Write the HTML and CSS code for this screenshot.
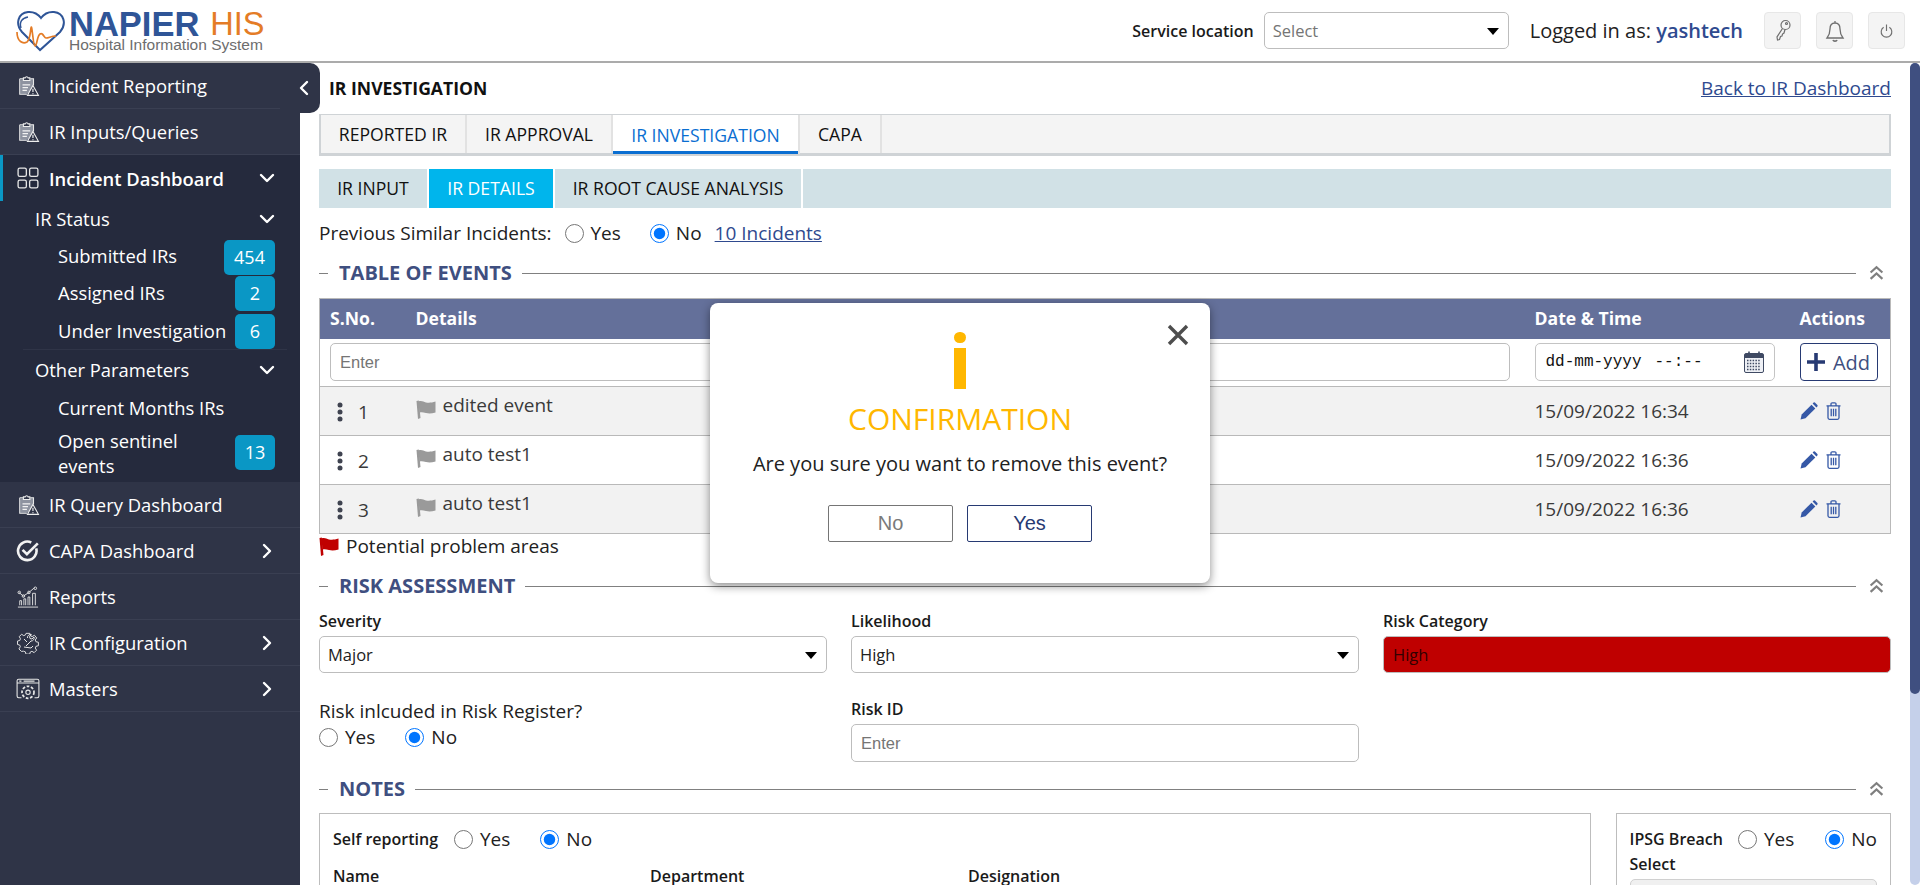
FILE: index.html
```html
<!DOCTYPE html>
<html lang="en">
<head>
<meta charset="utf-8">
<title>IR Investigation - Napier HIS</title>
<link rel="stylesheet" href="styles.css">
</head>
<body>
<svg class="defs" width="0" height="0" aria-hidden="true">
  <symbol id="i-clip" viewBox="0 0 20 20">
    <path d="M2.5 3.5h3M12 3.5h3v6M2.5 3.5v14h6.5" fill="#9aa0ac" stroke="#e8e8e8" stroke-width="1"/>
    <rect x="3" y="4" width="11.5" height="13" fill="#8e93a0"/>
    <path d="M5.8 4V2.6h1.6a1.4 1.4 0 0 1 2.7 0h1.6V5H5.8z" fill="#2f3447" stroke="#eee"/>
    <path d="M5 9h7M5 11.500h5M5 14h4" stroke="#f2f2f2" stroke-width="1"/>
    <path d="M14.500 9.500l5 9h-10z" fill="#2f3447" stroke="#eee"/>
    <path d="M14.500 12.500v3M14.500 16.500v1" stroke="#fff"/>
  </symbol>
  <symbol id="i-grid" viewBox="0 0 20 20" fill="none" stroke="#e6e6e6" stroke-width="1.200">
    <rect x="1" y="1" width="7.500" height="7.500" rx="1.500"/><rect x="11.500" y="1" width="7.500" height="7.500" rx="1.500"/>
    <rect x="1" y="12" width="7.500" height="7" rx="1.500"/><rect x="11.500" y="12" width="7.500" height="7" rx="1.500"/>
  </symbol>
  <symbol id="i-check" viewBox="0 0 22 20" fill="none" stroke="#f2f2f2" stroke-width="2.400">
    <path d="M18.500 7.500A8.500 8.500 0 1 1 14 2.200"/><path d="M6 9l4 4 10-10"/>
  </symbol>
  <symbol id="i-chart" viewBox="0 0 24 24" fill="none" stroke="#e6e6e6" stroke-width="1">
    <path d="M1 23h22M3 21v-5h2v5M7.500 21v-7h2v7M12 21v-9h2v9M17 21v-13h3v13"/>
    <path d="M2 7l5 4 6-4 6-5" /><circle cx="2.500" cy="7" r="1.400"/><circle cx="7" cy="11" r="1.400"/><circle cx="13" cy="7" r="1.400"/><circle cx="20" cy="2.500" r="1.400"/>
  </symbol>
  <symbol id="i-gear" viewBox="0 0 22 22" fill="none" stroke="#e6e6e6" stroke-width="1">
    <path d="M9 1h4l.6 2.600 1.800.8L17.800 3l2.400 2.800-1.500 2.200.7 1.800 2.600.6v3.600l-2.600.7-.7 1.700 1.400 2.300-2.600 2.600-2.300-1.400-1.700.7-.7 2.300H8.900l-.6-2.400-1.900-.7L4.100 20 1.500 17.400 3 15.100l-.7-1.800L0 12.700V9.100l2.400-.6.700-1.800L1.800 4.400 4.400 2l2.200 1.400 1.800-.8z" transform="translate(.5 .4) scale(.95)"/>
    <path d="M7 7l3 3M9 14l5-5a3 3 0 0 0 3-4l-2 2-2-.5-.5-2 2-1.800a3 3 0 0 0-4 3.300"/>
    <path d="M7 15l7 1 2-2"/>
  </symbol>
  <symbol id="i-window" viewBox="0 0 22 20" fill="none" stroke="#e6e6e6" stroke-width="1">
    <path d="M5 18H2.500A1.500 1.500 0 0 1 1 16.500v-14A1.500 1.500 0 0 1 2.500 1h17A1.500 1.500 0 0 1 21 2.500v14a1.500 1.500 0 0 1-1.500 1.500H17M1 4.500h20"/>
    <path d="M3 2.800h2M7 2.800h10" />
    <circle cx="11" cy="13" r="2"/><circle cx="11" cy="13" r="5.500" stroke-dasharray="2.500 1.500" stroke-width="1.600"/>
  </symbol>
  <symbol id="i-chev-d" viewBox="0 0 16 10" fill="none" stroke="#fff" stroke-width="2.400" stroke-linecap="round" stroke-linejoin="round">
    <path d="M2 2l6 6 6-6"/>
  </symbol>
  <symbol id="i-chev-r" viewBox="0 0 10 16" fill="none" stroke="#fff" stroke-width="2.400" stroke-linecap="round" stroke-linejoin="round">
    <path d="M2 2l6 6-6 6"/>
  </symbol>
  <symbol id="i-up" viewBox="0 0 14 14" fill="none" stroke="#7f7f7f" stroke-width="2">
    <path d="M1.500 6.500L7 1.500l5.500 5M1.500 12.500L7 7.500l5.500 5"/>
  </symbol>
  <symbol id="i-flag" viewBox="0 0 20 20">
    <path d="M0.500 2l2.300-.5L4.500 19 2 20z" fill="currentColor"/>
    <path d="M2.400 2.600c3-1.300 5 .2 7.500 .8 3 .6 5.800 .3 9.600-.9v11c-3.600 1.100-6.500 1.400-9.500 .6-2.800-.8-4.700-1.300-6.500-.4z" fill="currentColor"/>
  </symbol>
  <symbol id="i-pencil" viewBox="0 0 18 18">
    <path d="M0.500 17.500l1.200-5L11.500 2.700l3.800 3.800L5.500 16.300z" fill="#3558a6"/><path d="M12.600 1.600l1-1a1 1 0 0 1 1.300 0l2.500 2.500a1 1 0 0 1 0 1.300l-1 1z" fill="#3558a6"/>
  </symbol>
  <symbol id="i-trash" viewBox="0 0 15 18" fill="none" stroke="#3558a6" stroke-width="1.300">
    <path d="M.5 3.800h14M5 3.500V2a1.200 1.200 0 0 1 1.200-1.200h2.600A1.200 1.200 0 0 1 10 2v1.500M2 4v11.800A1.500 1.500 0 0 0 3.500 17.300h8a1.500 1.500 0 0 0 1.500-1.500V4M5.200 6.800v7.500M7.500 6.800v7.500M9.800 6.800v7.500"/>
  </symbol>
  <symbol id="i-kebab" viewBox="0 0 6 20">
    <circle cx="3" cy="3" r="2.500" fill="#3f4350"/><circle cx="3" cy="10" r="2.500" fill="#3f4350"/><circle cx="3" cy="17" r="2.500" fill="#3f4350"/>
  </symbol>
</svg>

<div class="app">
  <header class="topbar">
    <div class="logo">
      <svg class="logo-heart" viewBox="0 0 50 42" fill="none">
        <path d="M24 40L6 22C-1 14 2 3 12 2c6-.5 10 2 13 6 3-4 8-6.500 13-6 10 1 13 12 6 20z" stroke="#2f5597" stroke-width="2"/>
        <path d="M12 7C6 8 3 12 5 18" stroke="#2f5597" stroke-width="1.500"/>
        <path d="M1 22c0 10 6 12 10 10 3-2 3-8 4-14 1-6 2 18 4 18 2 0 2-10 5-12 3-2 4 4 6 4 3 0 5-2 10-2" stroke="#e47c26" stroke-width="1.700"/>
      </svg>
      <div class="logo-text">
        <div class="logo-name"><span class="logo-napier">NAPIER</span><span class="logo-his">HIS</span></div>
        <div class="logo-sub">Hospital Information System</div>
      </div>
    </div>
    <div class="top-right">
      <span class="svc-label">Service location</span>
      <div class="select-wrap svc-select"><select class="field-select muted"><option>Select</option></select></div>
      <span class="logged">Logged in as: <b>yashtech</b></span>
      <button class="icon-btn" aria-label="Key">
        <svg width="16" height="24" viewBox="0 0 16 24" fill="none" stroke="#6f6f6f" stroke-width="1.200"><circle cx="10.500" cy="6" r="4.500"/><circle cx="11.500" cy="4.500" r="1"/><path d="M7.500 9.500L2 18l.5 3 2-.5 1-3 1.500-.5.500-2 1.500-1 1-3.500"/></svg>
      </button>
      <button class="icon-btn" aria-label="Notifications">
        <svg width="20" height="24" viewBox="0 0 20 24" fill="none" stroke="#6f6f6f" stroke-width="1.300"><path d="M10 2v2M10 4c-4 0-5 3-5 6 0 5-1.500 7-3 9h16c-1.500-2-3-4-3-9 0-3-1-6-5-6z"/><path d="M8 21c.5 1.500 3.500 1.500 4 0" stroke-width="1.600"/></svg>
      </button>
      <button class="icon-btn" aria-label="Log out">
        <svg width="15" height="18" viewBox="0 0 18 22" fill="none" stroke="#6f6f6f" stroke-width="1.400"><path d="M9 3v8M5.500 6.500a6.500 6.500 0 1 0 7 0"/></svg>
      </button>
    </div>
  </header>

  <div class="workspace">
    <nav class="sidebar">
      <button class="collapse" aria-label="Collapse"><svg width="10" height="16" viewBox="0 0 10 16" fill="none" stroke="#fff" stroke-width="2.400" stroke-linecap="round" stroke-linejoin="round"><path d="M8 2L2 8l6 6"/></svg></button>
      <a class="nav-item first"><svg class="nav-ico"><use href="#i-clip"/></svg>Incident Reporting</a>
      <a class="nav-item"><svg class="nav-ico"><use href="#i-clip"/></svg>IR Inputs/Queries</a>
      <div class="nav-open">
        <a class="nav-item active"><svg class="nav-ico"><use href="#i-grid"/></svg><span class="grow">Incident Dashboard</span><svg class="chev-d"><use href="#i-chev-d"/></svg></a>
        <a class="sub-head"><span class="grow">IR Status</span><svg class="chev-d"><use href="#i-chev-d"/></svg></a>
        <a class="sub-item s1"><span class="grow">Submitted IRs</span><span class="badge wide">454</span></a>
        <a class="sub-item s2"><span class="grow">Assigned IRs</span><span class="badge">2</span></a>
        <a class="sub-item s3"><span class="grow">Under Investigation</span><span class="badge">6</span></a>
        <a class="sub-head divided"><span class="grow">Other Parameters</span><svg class="chev-d"><use href="#i-chev-d"/></svg></a>
        <a class="sub-item s4"><span class="grow">Current Months IRs</span></a>
        <a class="sub-item s5"><span class="grow">Open sentinel<br>events</span><span class="badge">13</span></a>
      </div>
      <a class="nav-item"><svg class="nav-ico"><use href="#i-clip"/></svg>IR Query Dashboard</a>
      <a class="nav-item"><svg class="nav-ico"><use href="#i-check"/></svg><span class="grow">CAPA Dashboard</span><svg class="chev-r"><use href="#i-chev-r"/></svg></a>
      <a class="nav-item"><svg class="nav-ico"><use href="#i-chart"/></svg><span class="grow">Reports</span></a>
      <a class="nav-item"><svg class="nav-ico"><use href="#i-gear"/></svg><span class="grow">IR Configuration</span><svg class="chev-r"><use href="#i-chev-r"/></svg></a>
      <a class="nav-item"><svg class="nav-ico"><use href="#i-window"/></svg><span class="grow">Masters</span><svg class="chev-r"><use href="#i-chev-r"/></svg></a>
    </nav>

    <main class="main">
      <div class="title-row">
        <h1 class="page-title">IR INVESTIGATION</h1>
        <a class="back-link" href="#">Back to IR Dashboard</a>
      </div>

      <div class="tabs">
        <a class="tab t1">REPORTED IR</a>
        <a class="tab t2">IR APPROVAL</a>
        <a class="tab t3 on">IR INVESTIGATION</a>
        <a class="tab t4">CAPA</a>
      </div>

      <div class="subtabs">
        <a class="subtab st1">IR INPUT</a>
        <a class="subtab st2 on">IR DETAILS</a>
        <a class="subtab st3">IR ROOT CAUSE ANALYSIS</a>
        <span class="subtab-fill"></span>
      </div>

      <div class="similar">
        <span class="similar-label">Previous Similar Incidents:</span>
        <label class="radio r-yes"><input type="radio" name="sim">Yes</label>
        <label class="radio"><input type="radio" name="sim" checked>No</label>
        <a class="incidents-link" href="#">10 Incidents</a>
      </div>

      <div class="section-head"><span class="section-title">TABLE OF EVENTS</span><span class="section-line"></span><svg class="up"><use href="#i-up"/></svg></div>

      <table class="events">
        <colgroup><col class="c-no"><col class="c-det"><col class="c-date"><col class="c-act"></colgroup>
        <thead>
          <tr><th>S.No.</th><th>Details</th><th>Date &amp; Time</th><th>Actions</th></tr>
        </thead>
        <tbody>
          <tr class="entry">
            <td colspan="2"><input class="field enter-main" placeholder="Enter"></td>
            <td>
              <div class="date-field"><span>dd-mm-yyyy</span><span>--:--</span>
                <svg class="cal" width="20" height="22" viewBox="0 0 20 22"><rect x="0.500" y="2.500" width="19" height="19" rx="1.500" fill="#eef0f5" stroke="#3f4a63"/><rect x="1" y="3" width="18" height="4" fill="#3f4a63"/><path d="M5 0.500v4M15 0.500v4" stroke="#3f4a63" stroke-width="1.600"/><path d="M3 9.500h14M3 12.500h14M3 15.500h14M3 18.500h14" stroke="#3f4a63" stroke-width="1.500" stroke-dasharray="1.500 1.300"/></svg>
              </div>
            </td>
            <td><button class="add-btn"><svg width="18" height="18" viewBox="0 0 18 18"><path d="M9 0v18M0 9h18" stroke="#273a73" stroke-width="3.600"/></svg>Add</button></td>
          </tr>
          <tr class="row shade">
            <td><div class="sno"><svg class="kebab"><use href="#i-kebab"/></svg><span class="num">1</span></div></td>
            <td><div class="detail"><svg class="flag grey"><use href="#i-flag"/></svg><span>edited event</span></div></td>
            <td>15/09/2022 16:34</td>
            <td><div class="acts"><svg class="pencil"><use href="#i-pencil"/></svg><svg class="trash"><use href="#i-trash"/></svg></div></td>
          </tr>
          <tr class="row">
            <td><div class="sno"><svg class="kebab"><use href="#i-kebab"/></svg><span class="num">2</span></div></td>
            <td><div class="detail"><svg class="flag grey"><use href="#i-flag"/></svg><span>auto test1</span></div></td>
            <td>15/09/2022 16:36</td>
            <td><div class="acts"><svg class="pencil"><use href="#i-pencil"/></svg><svg class="trash"><use href="#i-trash"/></svg></div></td>
          </tr>
          <tr class="row shade">
            <td><div class="sno"><svg class="kebab"><use href="#i-kebab"/></svg><span class="num">3</span></div></td>
            <td><div class="detail"><svg class="flag grey"><use href="#i-flag"/></svg><span>auto test1</span></div></td>
            <td>15/09/2022 16:36</td>
            <td><div class="acts"><svg class="pencil"><use href="#i-pencil"/></svg><svg class="trash"><use href="#i-trash"/></svg></div></td>
          </tr>
        </tbody>
      </table>

      <div class="legend"><svg class="flag red"><use href="#i-flag"/></svg>Potential problem areas</div>

      <div class="section-head"><span class="section-title">RISK ASSESSMENT</span><span class="section-line"></span><svg class="up"><use href="#i-up"/></svg></div>

      <div class="risk-grid">
        <div class="cell">
          <label class="field-label">Severity</label>
          <div class="select-wrap"><select class="field-select"><option>Major</option></select></div>
        </div>
        <div class="cell">
          <label class="field-label">Likelihood</label>
          <div class="select-wrap"><select class="field-select"><option>High</option></select></div>
        </div>
        <div class="cell">
          <label class="field-label">Risk Category</label>
          <input class="field risk-high" value="High" readonly>
        </div>
        <div class="cell register">
          <div class="register-q">Risk inlcuded in Risk Register?</div>
          <div class="register-opts">
            <label class="radio r-yes2"><input type="radio" name="reg">Yes</label>
            <label class="radio"><input type="radio" name="reg" checked>No</label>
          </div>
        </div>
        <div class="cell">
          <label class="field-label">Risk ID</label>
          <input class="field" placeholder="Enter">
        </div>
      </div>

      <div class="section-head notes-head"><span class="section-title">NOTES</span><span class="section-line"></span><svg class="up"><use href="#i-up"/></svg></div>

      <div class="notes">
        <div class="note-box main-note">
          <div class="opt-row">
            <span class="field-label self">Self reporting</span>
            <label class="radio r-yes3"><input type="radio" name="self">Yes</label>
            <label class="radio"><input type="radio" name="self" checked>No</label>
          </div>
          <div class="name-row">
            <span class="field-label">Name</span>
            <span class="field-label">Department</span>
            <span class="field-label">Designation</span>
          </div>
        </div>
        <div class="note-box ipsg">
          <div class="opt-row">
            <span class="field-label ipsg-label">IPSG Breach</span>
            <label class="radio r-yes4"><input type="radio" name="ipsg">Yes</label>
            <label class="radio"><input type="radio" name="ipsg" checked>No</label>
          </div>
          <div class="field-label ipsg-select">Select</div>
          <div class="ipsg-input"></div>
        </div>
      </div>

      <section class="modal" role="dialog">
        <button class="modal-close" aria-label="Close"><svg width="22" height="22" viewBox="0 0 22 22"><path d="M2 2l18 18M20 2L2 20" stroke="#4d4d4d" stroke-width="3.400"/></svg></button>
        <svg class="modal-i" width="12" height="58" viewBox="0 0 12 58"><rect x="0" y="0" width="12" height="11" rx="5.500" fill="#ffb700"/><rect x="0" y="16" width="12" height="41" fill="#ffb700"/></svg>
        <h2 class="modal-title">CONFIRMATION</h2>
        <p class="modal-text">Are you sure you want to remove this event?</p>
        <div class="modal-btns">
          <button class="m-btn no">No</button>
          <button class="m-btn yes">Yes</button>
        </div>
      </section>
    </main>

    <div class="scrollbar"><div class="scroll-thumb"></div></div>
  </div>
</div>
</body>
</html>
```

FILE: styles.css
```css
* { box-sizing: border-box; }
html, body { margin: 0; height: 100%; overflow: hidden; }
body { font-family: "Open Sans", sans-serif; font-size: 16px; color: #212121; background: #fff; }
.defs { position: absolute; }
a { color: inherit; text-decoration: none; }
button { font-family: inherit; cursor: pointer; }

.app { display: flex; flex-direction: column; height: 885px; }

/* top bar */
.topbar { height: 63px; flex: none; display: flex; align-items: center; justify-content: space-between; border-bottom: 2px solid #ababab; background: #fff; padding: 0 15px 0 16px; }
.logo { display: flex; align-items: center; gap: 3px; }
.logo-heart { width: 50px; height: 42px; }
.logo-text { display: flex; flex-direction: column; font-family: "Liberation Sans", sans-serif; }
.logo-name { display: flex; gap: 11px; line-height: 28px; height: 28px; }
.logo-napier { font-size: 34.500px; font-weight: 700; color: #2f5597; }
.logo-his { font-size: 32.500px; color: #e47c26; }
.logo-sub { font-size: 15.500px; line-height: 14px; color: #6d6d6d; white-space: nowrap; }
.top-right { display: flex; align-items: center; }
.svc-label { font-size: 16px; font-weight: 600; color: #1a1a1a; margin-right: 10px; }
.svc-select { width: 245px; }
.logged { font-size: 20px; margin: 0 21px 0 21px; color: #212121; white-space: nowrap; }
.logged b { font-weight: 600; color: #2f4a8f; }
.icon-btn { width: 37px; height: 37px; margin-left: 15px; padding: 0; display: flex; align-items: center; justify-content: center; background: #f4f4f4; border: 1px solid #e7e7e7; border-radius: 4px; }
.logged + .icon-btn { margin-left: 0; }

/* sidebar */
.workspace { flex: 1; display: flex; min-height: 0; position: relative; }
.sidebar { width: 300px; flex: none; background: #2f3447; color: #fff; position: relative; }
.collapse { position: absolute; left: 280px; top: 0; width: 40px; height: 50px; border: 0; padding: 0 0 0 19px; background: #2f3447; border-radius: 0 10px 10px 0; z-index: 2; display: flex; align-items: center; }
.collapse svg { display: block; }
.nav-item { height: 46px; display: flex; align-items: center; padding: 0 25px 0 16px; font-size: 18.400px; border-bottom: 1px solid #3a3f52; white-space: nowrap; color: #fff; }
.nav-ico { width: 24px; height: 22px; margin-right: 9px; flex: none; }
.grow { flex: 1; }
.nav-open { background: #252a3d; padding-bottom: 4px; }
.nav-open .nav-item { background: #252a3d; border-bottom: 0; font-weight: 600; box-shadow: inset 3px 0 #0a97c5; }
.chev-d { width: 16px; height: 10px; flex: none; }
.chev-r { width: 10px; height: 16px; flex: none; margin-right: 3px; }
.sub-head { display: flex; align-items: center; height: 35px; margin: 0 25px 0 35px; font-size: 18.400px; }
.sub-head.divided { border-top: 1px solid #2f3447; margin-left: 23px; padding-left: 12px; margin-right: 13px; padding-right: 12px; height: 40px; }
.sub-item { display: flex; align-items: center; padding: 0 25px 0 58px; font-size: 18.400px; line-height: 25px; }
.s1 { height: 38px; }
.s2 { height: 37px; }
.s3 { height: 38px; }
.s4 { height: 36px; }
.s5 { height: 50px; margin-top: 3px; }
.s1 .badge { margin-top: 4px; }
.s2 .badge { margin-top: 2px; }
.s3 .badge { margin-top: 3px; }
.s5 .badge { margin-top: -1px; }
.badge { min-width: 40px; height: 35px; padding: 0 5px; display: flex; align-items: center; justify-content: center; background: #0a97c5; border-radius: 5px; color: #fff; font-size: 18px; }
.badge.wide { min-width: 51px; }

/* main */
.main { flex: 1; min-width: 0; padding: 0 19px; position: relative; overflow: hidden; }
.title-row { height: 51px; display: flex; align-items: center; justify-content: space-between; padding: 0 0 2px 10px; }
.page-title { margin: 0; font-size: 17.600px; font-weight: 700; color: #111; }
.back-link { font-size: 19px; color: #2f4a8f; text-decoration: underline; }

.tabs { height: 42px; display: flex; background: #f4f4f4; border: 2px solid #cfd3d6; border-top-width: 1px; border-bottom-width: 3px; }
.tab { display: flex; align-items: center; justify-content: center; font-size: 17.600px; color: #111; border-right: 2px solid #e2e2e2; }
.t1 { width: 146px; }
.t2 { width: 146px; }
.t3 { width: 187px; }
.t4 { width: 82px; }
.tab.on { background: #fff; color: #0a6ed1; box-shadow: inset 0 -3px #0a6ed1; margin-bottom: -1px; }

.subtabs { height: 39px; margin-top: 13px; display: flex; gap: 2px; }
.subtab { display: flex; align-items: center; justify-content: center; background: #d1e1e6; font-size: 17.600px; color: #111; padding-bottom: 2px; }
.st1 { width: 108px; }
.st2 { width: 124px; }
.st3 { width: 246px; }
.subtab.on { background: #00b5ec; color: #fff; }
.subtab-fill { flex: 1; background: #d1e1e6; }

.similar { height: 50px; display: flex; align-items: center; font-size: 19px; }
.similar-label { margin-right: 13px; }
.radio { display: inline-flex; align-items: center; font-size: 19px; color: #212121; }
.radio input { width: 19px; height: 19px; margin: 0 7px 0 0; flex: none; }
.r-yes { margin-right: 29px; }
.incidents-link { margin-left: 13px; color: #2f4a8f; text-decoration: underline; }

.section-head { height: 30px; display: flex; align-items: center; }
.section-head::before { content: ""; width: 9px; height: 1px; background: #808080; margin-right: 11px; }
.section-title { font-size: 20px; font-weight: 700; color: #3f4f80; white-space: nowrap; margin-top: -2px; }
.section-line { flex: 1; height: 1px; background: #808080; margin: 0 9px 0 10px; }
.up { width: 15px; height: 16px; margin: 0 7px 0 4px; flex: none; }

.events { width: 100%; border-collapse: collapse; table-layout: fixed; margin-top: 10px; border: 1px solid #b9b9b9; font-size: 19px; }
.c-no { width: 86px; }
.c-date { width: 265px; }
.c-act { width: 101px; }
.events th { height: 40px; background: #64709a; color: #fff; text-align: left; font-weight: 700; font-size: 17.600px; padding: 0 0 2px 10px; }
.events td { padding: 0; height: 49px; border-bottom: 1px solid #b9b9b9; color: #3a3a3a; }
.events td:nth-child(3), .events td:nth-child(4) { padding-left: 10px; }
.events .entry td { height: 48px; padding-left: 10px; background: #fff; }
.shade td { background: #f2f2f2; }
.sno { display: flex; align-items: center; padding-left: 17px; padding-top: 2px; }
.kebab { width: 6px; height: 20px; }
.num { margin-left: 15px; margin-top: -1px; }
.detail { display: flex; align-items: flex-start; padding-left: 10px; height: 30px; }
.detail span { line-height: 24px; margin-left: 7px; margin-top: -3px; }
.flag { width: 20px; height: 20px; flex: none; }
.flag.grey { color: #9a9a9a; margin-top: 3px; }
.flag.red { color: #c00000; margin-right: 7px; }
.acts { display: flex; align-items: center; gap: 8px; }
.pencil { width: 18px; height: 18px; }
.trash { width: 15px; height: 18px; }

.field { display: block; width: 100%; height: 38px; border: 1px solid #bdbdbd; border-radius: 5px; padding: 0 9px; font-family: "Liberation Sans", sans-serif; font-size: 16.500px; background: #fff; color: #212121; outline: 0; }
.field::placeholder { color: #757575; opacity: 1; }
.enter-main { width: 1180px; }
.date-field { width: 240px; height: 38px; border: 1px solid #c4c4c4; border-radius: 5px; display: flex; align-items: center; gap: 13px; padding: 0 10px 0 10px; font-family: "Liberation Mono", monospace; font-size: 16px; color: #111; background: #fff; }
.cal { margin-left: auto; }
.add-btn { width: 78px; height: 38px; padding: 0; display: flex; align-items: center; justify-content: center; gap: 8px; background: #fff; border: 1px solid #273a73; border-radius: 4px; font-size: 20px; color: #3f4f80; }

.legend { height: 24px; display: flex; align-items: center; font-size: 19px; color: #212121; margin-bottom: 13px; }

.risk-grid { display: grid; grid-template-columns: repeat(3, 1fr); column-gap: 24px; row-gap: 24px; margin-top: 8px; }
.field-label { display: block; font-size: 16px; font-weight: 600; color: #1a1a1a; line-height: 24px; margin-bottom: 3px; white-space: nowrap; }
.select-wrap { position: relative; }
.select-wrap::after { content: ""; position: absolute; right: 10px; top: 50%; margin-top: -3px; border: 6px solid transparent; border-top: 7px solid #000; border-bottom: 0; pointer-events: none; }
.field-select { display: block; width: 100%; height: 37px; appearance: none; -webkit-appearance: none; border: 1px solid #bdbdbd; border-radius: 5px; background: #fff; padding: 0 8px; font-family: "Open Sans", sans-serif; font-size: 16.500px; color: #212121; outline: 0; }
.field-select.muted { color: #757575; }
.risk-high { height: 37px; background: #bf0000; color: #300; font-family: "Open Sans", sans-serif; }
.register-q { font-size: 19px; line-height: 24px; margin-top: 2px; }
.register-opts { display: flex; margin-top: 1px; }
.r-yes2 { margin-right: 30px; }

.notes-head { margin-top: 12px; }
.notes { display: flex; gap: 25px; margin-top: 9px; height: 100px; }
.note-box { border: 1px solid #bdbdbd; }
.main-note { width: 1272px; padding: 13px 13px 0; }
.ipsg { flex: 1; padding: 13px 13px 0; }
.opt-row { display: flex; align-items: center; height: 24px; white-space: nowrap; }
.opt-row .field-label { margin-bottom: 0; }
.self { margin-right: 16px; }
.r-yes3 { margin-right: 30px; }
.name-row { display: grid; grid-template-columns: 317px 318px 1fr; margin-top: 16px; }
.name-row .field-label { line-height: 18px; margin: 0; }
.ipsg-label { margin-right: 15px; }
.r-yes4 { margin-right: 31px; }
.ipsg-select { margin: 1px 0 3px; line-height: 24px; }
.ipsg-input { height: 37px; background: #f0f0f0; border: 1px solid #d0d0d0; border-radius: 5px; }

/* modal */
.modal { position: absolute; left: 410px; top: 240px; width: 500px; height: 280px; background: #fff; border-radius: 8px; box-shadow: 0 3px 10px rgba(0,0,0,.45); display: flex; flex-direction: column; align-items: center; padding-top: 29px; z-index: 5; }
.modal-close { position: absolute; right: 21px; top: 21px; width: 22px; height: 22px; padding: 0; border: 0; background: none; }
.modal-close svg { display: block; }
.modal-i { display: block; }
.modal-title { margin: 9px 0 0; font-size: 30px; font-weight: 400; line-height: 40px; color: #ffb700; }
.modal-text { margin: 11px 0 0; font-size: 20px; line-height: 28px; color: #212121; }
.modal-btns { display: flex; gap: 14px; margin-top: 27px; }
.m-btn { width: 125px; height: 37px; padding: 0; background: #fff; border-radius: 2px; font-family: "Liberation Sans", sans-serif; font-size: 20px; }
.m-btn.no { border: 1px solid #757575; color: #7a7a7a; }
.m-btn.yes { border: 1px solid #273a73; color: #273a73; }

/* scrollbar */
.scrollbar { width: 10px; flex: none; background: #c5d0ea; border-radius: 5px; }
.scroll-thumb { height: 631px; background: #3f4f80; border-radius: 5px; }
```
